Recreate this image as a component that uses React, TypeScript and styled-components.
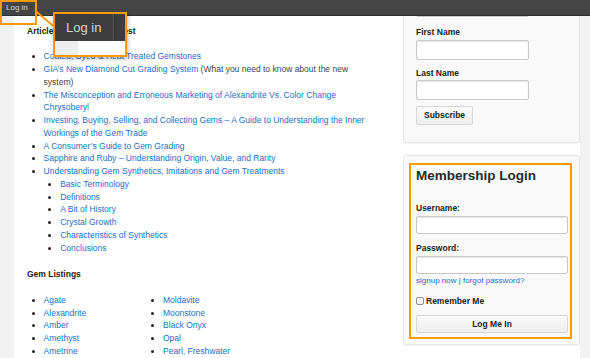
import styled, { createGlobalStyle } from 'styled-components'

const GlobalStyle = createGlobalStyle`
  html, body {
    margin: 0;
    padding: 0;
  }
  body {
    background: #f1f1f1;
    font-family: 'Liberation Sans', Arial, sans-serif;
    color: #333;
  }
`

type Article = { title: string; note?: string; children?: string[] }

const articles: Article[] = [
  { title: 'Coated, Dyed & Heat Treated Gemstones' },
  {
    title: 'GIA’s New Diamond Cut Grading System',
    note: '(What you need to know about the new system)',
  },
  { title: 'The Misconception and Erroneous Marketing of Alexandrite Vs. Color Change Chrysoberyl' },
  {
    title:
      'Investing, Buying, Selling, and Collecting Gems – A Guide to Understanding the Inner Workings of the Gem Trade',
  },
  { title: 'A Consumer’s Guide to Gem Grading' },
  { title: 'Sapphire and Ruby – Understanding Origin, Value, and Rarity' },
  {
    title: 'Understanding Gem Synthetics, Imitations and Gem Treatments',
    children: [
      'Basic Terminology',
      'Definitions',
      'A Bit of History',
      'Crystal Growth',
      'Characteristics of Synthetics',
      'Conclusions',
    ],
  },
]

const gemColumns = [
  ['Agate', 'Alexandrite', 'Amber', 'Amethyst', 'Ametrine', 'Andalusite', 'Apatite'],
  ['Moldavite', 'Moonstone', 'Black Onyx', 'Opal', 'Pearl, Freshwater', 'Pearl, Saltwater', 'Peridot'],
]

export default function App() {
  return (
    <>
      <GlobalStyle />
      <Screen>
        <AdminBar>
          <AdminLink href="#">Log in</AdminLink>
        </AdminBar>

        <Page>
          <Main>
            <SectionTitle>Articles of General Interest</SectionTitle>
            <List $bottom={13.5}>
              {articles.map((a) => (
                <Item key={a.title}>
                  <Link href="#">{a.title}</Link>
                  {a.note && <Note> {a.note}</Note>}
                  {a.children && (
                    <List>
                      {a.children.map((c) => (
                        <Item key={c}>
                          <Link href="#">{c}</Link>
                        </Item>
                      ))}
                    </List>
                  )}
                </Item>
              ))}
            </List>

            <SectionTitle $bottom={13.2}>Gem Listings</SectionTitle>
            <GemColumns>
              {gemColumns.map((col, i) => (
                <ColumnList key={i}>
                  {col.map((g) => (
                    <Item key={g}>
                      <Link href="#">{g}</Link>
                    </Item>
                  ))}
                </ColumnList>
              ))}
            </GemColumns>
          </Main>

          <Sidebar>
            {/* newsletter widget, scrolled so its top sits under the bar */}
            <Panel $top={-43.5} $pad="10px 12px 17.4px 12px">
              <Field $bottom={9.3}>
                <Label>Email</Label>
                <Input />
              </Field>
              <Field>
                <Label>First Name</Label>
                <Input />
              </Field>
              <Field $bottom={5.3}>
                <Label>Last Name</Label>
                <Input />
              </Field>
              <Button>Subscribe</Button>
            </Panel>

            <Panel $top={12} $pad="7px 7px 5px 5px">
              <Highlight>
                <LoginTitle>Membership Login</LoginTitle>
                <Field $bottom={8}>
                  <Label $gap={2}>Username:</Label>
                  <Input $wide />
                </Field>
                <Field $bottom={1.5}>
                  <Label $gap={2}>Password:</Label>
                  <Input $wide type="password" />
                </Field>
                <LinkRow>
                  <Link href="#">signup now</Link> <Pipe>|</Pipe> <Link href="#">forgot password?</Link>
                </LinkRow>
                <RememberRow>
                  <Check type="checkbox" />
                  Remember Me
                </RememberRow>
                <Button $wide>Log Me In</Button>
              </Highlight>
            </Panel>
          </Sidebar>
        </Page>

        {/* annotation: magnified admin bar */}
        <Marker />
        <Connector width="60" height="30" viewBox="0 0 60 30">
          <line x1="36" y1="11.5" x2="54" y2="26.5" stroke="#ff9a00" strokeWidth="2" />
        </Connector>
        <Callout>
          <CalloutBar>
            <CalloutItem>Log in</CalloutItem>
            <CalloutRest />
          </CalloutBar>
          <CalloutBody>
            <CalloutStrip />
          </CalloutBody>
        </Callout>
      </Screen>
    </>
  )
}

const Screen = styled.div`
  position: relative;
  width: 590px;
  height: 358px;
  overflow: hidden;
`

const AdminBar = styled.div`
  height: 15px;
  background: #444;
  border-bottom: 1px solid #2e2e2e;
  display: flex;
  align-items: center;
  padding-left: 6px;
`

const AdminLink = styled.a`
  color: #d8d8d8;
  font-size: 8px;
  line-height: 15px;
  text-decoration: none;
`

const Page = styled.div`
  display: flex;
  margin-left: 14px;
  width: 566px;
  height: 342px;
  background: #fff;
  overflow: hidden;
`

const Main = styled.div`
  width: 389px;
  flex-shrink: 0;
  box-sizing: border-box;
  padding: 9.3px 26px 0 13px;
`

const SectionTitle = styled.h3<{ $bottom?: number }>`
  margin: 0 0 ${({ $bottom }) => $bottom ?? 12.3}px;
  font-size: 8.5px;
  line-height: 12.75px;
  font-weight: bold;
  color: #222;
`

const List = styled.ul<{ $bottom?: number }>`
  margin: 0 0 ${({ $bottom }) => $bottom ?? 0}px;
  padding-left: 16.6px;
  list-style-type: disc;
  color: #222;
`

const Item = styled.li`
  font-size: 8.5px;
  line-height: 12.75px;
`

const Link = styled.a`
  color: #2271c9;
  text-decoration: none;
`

const Note = styled.span`
  color: #444;
`

const GemColumns = styled.div`
  display: flex;
`

const ColumnList = styled(List)`
  width: 102.8px;
  flex-shrink: 0;
`

const Sidebar = styled.div`
  width: 177px;
  flex-shrink: 0;
`

const Panel = styled.div<{ $top: number; $pad: string }>`
  margin-top: ${({ $top }) => $top}px;
  padding: ${({ $pad }) => $pad};
  background: #f9f9f9;
  border: 1px solid #e6e6e6;
  border-radius: 3px;
  box-shadow: 0 1px 1px rgba(0, 0, 0, 0.04);
`

const Field = styled.div<{ $bottom?: number }>`
  margin-bottom: ${({ $bottom }) => $bottom ?? 7}px;
`

const Label = styled.label<{ $gap?: number }>`
  display: block;
  margin-bottom: ${({ $gap }) => $gap ?? 1.5}px;
  font-size: 8.5px;
  line-height: 12px;
  font-weight: bold;
  color: #222;
`

const Input = styled.input<{ $wide?: boolean }>`
  display: block;
  box-sizing: border-box;
  width: ${({ $wide }) => ($wide ? '100%' : '113px')};
  height: ${({ $wide }) => ($wide ? 18 : 20)}px;
  margin: 0;
  padding: 0 3px;
  background: #fff;
  border: 1px solid #c9c9c9;
  border-radius: 2px;
  box-shadow: inset 0 1px 2px rgba(0, 0, 0, 0.1);
  outline: none;
`

const Button = styled.button<{ $wide?: boolean }>`
  display: block;
  box-sizing: border-box;
  width: ${({ $wide }) => ($wide ? '100%' : 'auto')};
  height: ${({ $wide }) => ($wide ? 18 : 19)}px;
  margin: 0;
  padding: 0 7px;
  font-family: 'Liberation Sans', Arial, sans-serif;
  font-size: 8.5px;
  font-weight: bold;
  color: #222;
  background: linear-gradient(#fbfbfb, #ededed);
  border: 1px solid #d6d6d6;
  border-radius: 2px;
`

const Highlight = styled.div`
  border: 2px solid #ff9a00;
  padding: 3px 2px 4.3px 5px;
`

const LoginTitle = styled.h2`
  margin: 0 0 18px;
  font-size: 13.5px;
  line-height: 16px;
  font-weight: bold;
  color: #2a2a2a;
`

const LinkRow = styled.div`
  font-size: 8px;
  line-height: 11px;
  margin-bottom: 8.5px;
`

const Pipe = styled.span`
  color: #555;
`

const RememberRow = styled.label`
  display: flex;
  align-items: center;
  gap: 2px;
  margin-bottom: 7.7px;
  font-size: 8.5px;
  line-height: 12px;
  font-weight: bold;
  color: #222;
`

const Check = styled.input`
  appearance: none;
  width: 8px;
  height: 8px;
  margin: 1px 0 0;
  background: linear-gradient(#fff, #eee);
  border: 1px solid #8e8e8e;
  border-radius: 2px;
  box-sizing: border-box;
`

const Marker = styled.div`
  position: absolute;
  left: 0;
  top: 0;
  width: 37px;
  height: 25px;
  box-sizing: border-box;
  border: 2px solid #ff9a00;
`

const Connector = styled.svg`
  position: absolute;
  left: 0;
  top: 0;
  pointer-events: none;
`

const Callout = styled.div`
  position: absolute;
  left: 53px;
  top: 12px;
  width: 74px;
  height: 45px;
  box-sizing: border-box;
  border: 2px solid #ff9a00;
  display: flex;
  flex-direction: column;
  background: #fff;
  box-shadow: 1px 2px 4px rgba(0, 0, 0, 0.25);
`

const CalloutBar = styled.div`
  height: 27px;
  display: flex;
  background: #3d3d3d;
`

const CalloutItem = styled.div`
  width: 59px;
  box-sizing: border-box;
  padding-left: 11px;
  border-right: 1px solid #5a5a5a;
  color: #d4d4d4;
  font-size: 13px;
  line-height: 27px;
`

const CalloutRest = styled.div`
  flex: 1;
  border-left: 1px solid #2c2c2c;
`

const CalloutBody = styled.div`
  flex: 1;
  display: flex;
`

const CalloutStrip = styled.div`
  width: 23px;
  background: #eeeeee;
`
